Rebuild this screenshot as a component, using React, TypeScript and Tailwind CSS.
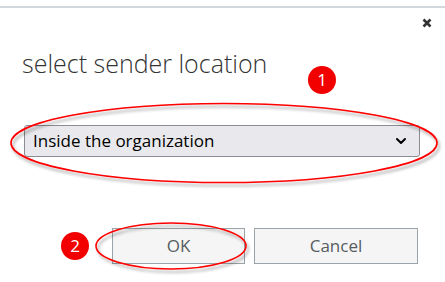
import { ChevronDown } from "lucide-react";

const Badge = ({ n }: { n: number }) => (
  <div className="flex h-[28px] w-[28px] items-center justify-center rounded-full bg-[#f20000] text-[17px] text-white">
    {n}
  </div>
);

export default function App() {
  return (
    <div
      className="relative h-[282px] w-[445px] overflow-hidden bg-white"
      style={{ fontFamily: '"Open Sans", "Liberation Sans", sans-serif' }}
    >
      <div className="mt-[6px] h-[2px] w-full bg-[#d3d8dc]" />

      {/* close */}
      <div className="flex justify-end pr-[13px] pt-[10px]">
        <svg width="10" height="10" viewBox="0 0 10 10">
          <path d="M1.5 1.5 L8.5 8.5 M8.5 1.5 L1.5 8.5" stroke="#333" strokeWidth="2.6" />
        </svg>
      </div>

      <h1 className="ml-[22px] mt-[20px] text-[25px] font-light leading-[30px] text-[#333]">
        select sender location
      </h1>

      {/* dropdown */}
      <div className="ml-[24px] mt-[47px] flex h-[32px] w-[396px] items-center justify-between rounded-[3px] border border-[#8c8c94] bg-[#e9e9ed] pl-[8px] pr-[10px]">
        <span className="text-[17px] text-black">Inside the organization</span>
        <ChevronDown className="h-[16px] w-[16px] text-black" strokeWidth={3} />
      </div>

      {/* buttons */}
      <div className="ml-[112px] mt-[71px] flex gap-[9px]">
        <button className="h-[36px] w-[133px] border border-[#9aa4a8] bg-[#f5f5f5] text-[17px] text-[#555c61]">
          OK
        </button>
        <button className="h-[36px] w-[164px] border border-[#9aa4a8] bg-[#f5f5f5] text-[17px] text-[#555c61]">
          Cancel
        </button>
      </div>

      {/* annotations */}
      <svg className="pointer-events-none absolute left-0 top-0" width="445" height="282">
        <defs>
          <filter id="sh" x="-10%" y="-20%" width="120%" height="140%">
            <feDropShadow dx="2" dy="3" stdDeviation="1.5" floodColor="#000" floodOpacity="0.35" />
          </filter>
        </defs>
        <ellipse cx="224" cy="143" rx="213" ry="39.5" fill="none" stroke="#f00" strokeWidth="1.6" filter="url(#sh)" />
        <ellipse cx="171" cy="246" rx="75" ry="23" fill="none" stroke="#f00" strokeWidth="1.6" filter="url(#sh)" />
      </svg>
      <div className="absolute left-[308px] top-[66px]">
        <Badge n={1} />
      </div>
      <div className="absolute left-[61px] top-[232px]">
        <Badge n={2} />
      </div>
    </div>
  );
}
